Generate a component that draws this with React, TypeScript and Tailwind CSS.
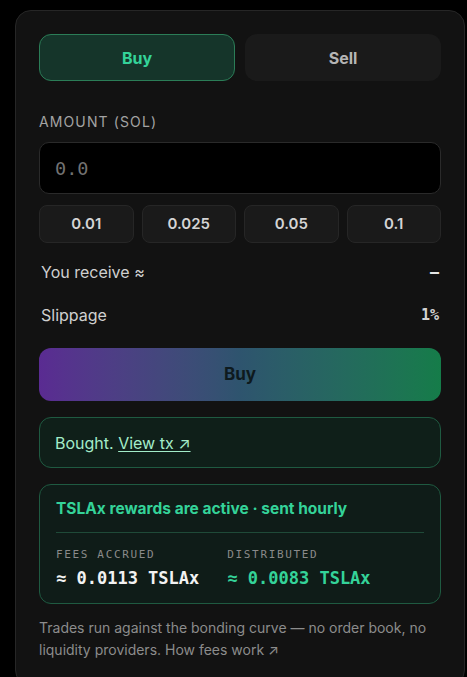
import { useState } from "react";

const presets = ["0.01", "0.025", "0.05", "0.1"];

const sans = "font-['Inter','Noto_Sans',sans-serif]";
const mono = "font-['DejaVu_Sans_Mono','Liberation_Mono',monospace]";

function Stat({ label, value, green }: { label: string; value: string; green?: boolean }) {
  return (
    <div className="flex flex-col">
      <span className={`${mono} text-[11px] leading-4 tracking-[0.15em] text-[#8a8a8a]`}>
        {label}
      </span>
      <span
        className={`${mono} mt-[3px] text-[17px] leading-6 font-bold ${
          green ? "text-[#34d399]" : "text-[#f2f2f2]"
        }`}
      >
        {value}
      </span>
    </div>
  );
}

export default function App() {
  const [side, setSide] = useState<"buy" | "sell">("buy");
  const [amount, setAmount] = useState("");

  return (
    <div className={`${sans} min-h-screen bg-black pt-[10px] pl-[15px]`}>
      <div className="w-[450px] rounded-2xl border border-[#262626] bg-[#121212] px-[23px] pt-[23px] pb-6">
        <div className="flex gap-[10px]">
          <button
            onClick={() => setSide("buy")}
            className={`h-[47px] flex-1 rounded-xl border text-[16px] font-bold ${
              side === "buy"
                ? "border-[#2b7d57] bg-[#15352a] text-[#34d399]"
                : "border-transparent bg-[#1a1a1a] text-[#b5b5b5]"
            }`}
          >
            Buy
          </button>
          <button
            onClick={() => setSide("sell")}
            className={`h-[47px] flex-1 rounded-xl border text-[16px] font-bold ${
              side === "sell"
                ? "border-[#2b7d57] bg-[#15352a] text-[#34d399]"
                : "border-transparent bg-[#1a1a1a] text-[#b5b5b5]"
            }`}
          >
            Sell
          </button>
        </div>

        <div className="mt-[31px] text-[14px] leading-5 tracking-[0.08em] text-[#a3a3a3]">
          AMOUNT (SOL)
        </div>
        <input
          value={amount}
          onChange={(e) => setAmount(e.target.value)}
          placeholder="0.0"
          className={`${mono} mt-[10px] h-[52px] w-full rounded-[10px] border border-[#2a2a2a] bg-black px-[15px] text-[18.5px] text-[#e5e5e5] placeholder:text-[#727272] focus:outline-none`}
        />

        <div className="mt-[11px] grid grid-cols-4 gap-2">
          {presets.map((p) => (
            <button
              key={p}
              onClick={() => setAmount(p)}
              className="h-[38px] rounded-lg border border-[#262626] bg-[#1a1a1a] text-[15px] font-semibold text-[#d4d4d4]"
            >
              {p}
            </button>
          ))}
        </div>

        <div className="mt-[18px] flex h-[22px] items-center justify-between px-0.5 text-[16px] text-[#d0d0d0]">
          <span>You receive ≈</span>
          <span className={`${mono} text-[15px] font-bold text-[#e5e5e5]`}>—</span>
        </div>
        <div className="mt-[21px] flex h-[22px] items-center justify-between px-0.5 text-[16px] text-[#d0d0d0]">
          <span>Slippage</span>
          <span className={`${mono} text-[15px] font-bold text-[#d4d4d4]`}>1%</span>
        </div>

        <button className="mt-[22px] h-[53px] w-full rounded-xl bg-gradient-to-r from-[#5a2b92] via-[#2e546e] to-[#157c49] text-[17px] font-bold text-[#0e1a1e]">
          Buy
        </button>

        <div className="mt-4 flex h-[51px] items-center rounded-xl border border-[#1f5a41] bg-[#0f1f19] px-[15px] text-[16px] text-[#a3ecc9]">
          Bought.&nbsp;
          <a className="underline underline-offset-2" href="#">
            View tx ↗
          </a>
        </div>

        <div className="mt-4 rounded-xl border border-[#1f5a41] bg-[#0f1c18] px-4 pt-[13px] pb-[13px]">
          <div className="text-[15.5px] leading-[22px] font-bold text-[#34d399]">
            TSLAx rewards are active · sent hourly
          </div>
          <div className="mt-3 border-t border-[#1f4a38]" />
          <div className="mt-[14px] flex gap-7">
            <Stat label="FEES ACCRUED" value="≈ 0.0113 TSLAx" />
            <Stat label="DISTRIBUTED" value="≈ 0.0083 TSLAx" green />
          </div>
        </div>

        <p className="mt-[13px] text-[14px] leading-[22px] text-[#8c8c8c]">
          Trades run against the bonding curve — no order book, no liquidity providers. How fees
          work ↗
        </p>
      </div>
    </div>
  );
}
